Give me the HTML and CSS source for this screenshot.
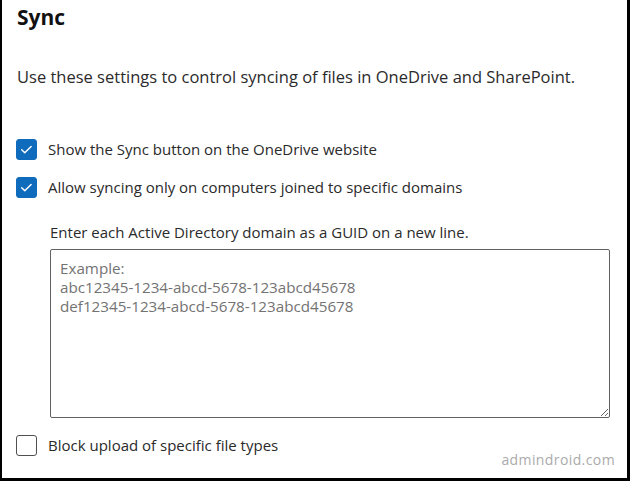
FILE: index.html
```html
<!DOCTYPE html>
<html>
<head>
<meta charset="utf-8">
<link rel="stylesheet" href="styles.css">
</head>
<body>
<div class="frame">
  <h1 class="title">Sync</h1>
  <p class="desc">Use these settings to control syncing of files in OneDrive and SharePoint.</p>
  <div class="options">
    <label class="check-row">
      <span class="box checked"><svg viewBox="0 0 21 21" width="21" height="21"><path d="M5.2 10.8l3.4 3.3 7-7" fill="none" stroke="#fff" stroke-width="1.6" stroke-linecap="round" stroke-linejoin="round"/></svg></span>
      <span class="label">Show the Sync button on the OneDrive website</span>
    </label>
    <label class="check-row">
      <span class="box checked"><svg viewBox="0 0 21 21" width="21" height="21"><path d="M5.2 10.8l3.4 3.3 7-7" fill="none" stroke="#fff" stroke-width="1.6" stroke-linecap="round" stroke-linejoin="round"/></svg></span>
      <span class="label">Allow syncing only on computers joined to specific domains</span>
    </label>
  </div>
  <div class="domains">
    <p class="hint">Enter each Active Directory domain as a GUID on a new line.</p>
    <textarea class="guid" placeholder="Example:&#10;abc12345-1234-abcd-5678-123abcd45678&#10;def12345-1234-abcd-5678-123abcd45678"></textarea>
  </div>
  <label class="check-row last">
    <span class="box"></span>
    <span class="label">Block upload of specific file types</span>
  </label>
  <div class="watermark">admindroid.com</div>
</div>
</body>
</html>
```

FILE: styles.css
```css
* { box-sizing: border-box; }
html, body { margin: 0; padding: 0; background: #fff; }
body { font-family: "Open Sans", "Noto Sans", sans-serif; color: #2a2a2a; }
.frame {
  width: 630px;
  height: 481px;
  border-left: 2px solid #000;
  border-right: 3px solid #000;
  border-bottom: 3px solid #000;
  padding: 0 0 0 14px;
  position: relative;
  display: flex;
  flex-direction: column;
}
.title {
  margin: 3px 0 0 1px;
  font-size: 21px;
  font-weight: 700;
  line-height: 28px;
  color: #111;
}
.desc {
  margin: 35px 0 0 1px;
  font-size: 16.5px;
  line-height: 22px;
  color: #2b2b2b;
}
.options { margin-top: 51px; display: flex; flex-direction: column; gap: 17px; }
.check-row { display: flex; align-items: center; gap: 11px; font-size: 15px; line-height: 21px; }
.box {
  width: 21px; height: 21px;
  border: 1px solid #505050;
  border-radius: 3px;
  display: flex; align-items: center; justify-content: center;
  flex: none;
}
.box.checked { background: #0f6cbd; border-color: #0f6cbd; }
.box svg { display: block; }
.domains { margin: 24px 0 0 34px; display: flex; flex-direction: column; }
.hint { margin: 0; font-size: 15px; line-height: 20px; }
.guid {
  margin-top: 7px;
  width: 560px;
  height: 169px;
  border: 1px solid #616161;
  border-radius: 2px;
  padding: 9px 9px;
  font-family: inherit;
  font-size: 15.2px;
  line-height: 19px;
  resize: both;
}
.guid::placeholder { color: #737373; }
.last { margin-top: 17px; }
.watermark {
  position: absolute;
  right: 12px;
  bottom: 9px;
  font-size: 14px;
  color: #ababab;
  letter-spacing: 0.4px;
}
```
